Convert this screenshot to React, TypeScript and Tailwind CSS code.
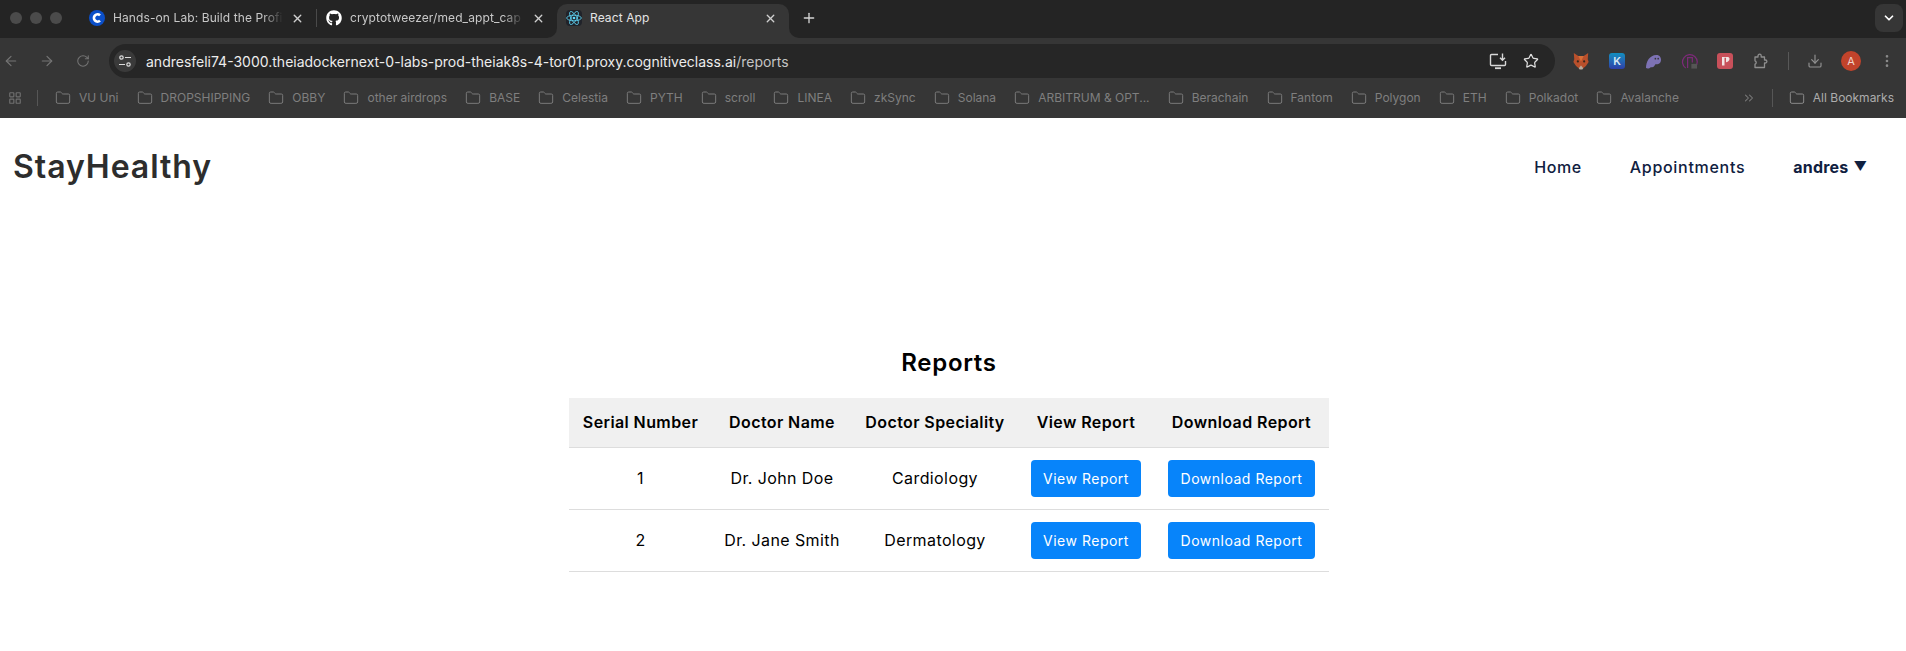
import { ArrowLeft, ArrowRight, RotateCw, Star, Download, EllipsisVertical, Plus, X, ChevronDown, ChevronsRight, Folder, LayoutGrid } from 'lucide-react'
import { FaGithub } from 'react-icons/fa'

const bookmarks = ['VU Uni', 'DROPSHIPPING', 'OBBY', 'other airdrops', 'BASE', 'Celestia', 'PYTH', 'scroll', 'LINEA', 'zkSync', 'Solana', 'ARBITRUM & OPT...', 'Berachain', 'Fantom', 'Polygon', 'ETH', 'Polkadot', 'Avalanche']

const reports = [
    { id: 1, doctor: 'Dr. John Doe', speciality: 'Cardiology' },
    { id: 2, doctor: 'Dr. Jane Smith', speciality: 'Dermatology' },
]

function ReactIcon() {
    return (
        <div className="w-4 h-4 rounded-sm bg-[#20232a] flex items-center justify-center shrink-0">
            <svg viewBox="-12 -12 24 24" className="w-4 h-4" fill="none" stroke="#61dafb" strokeWidth="1.2">
                <circle r="2" fill="#61dafb" stroke="none" />
                <ellipse rx="11" ry="4.2" />
                <ellipse rx="11" ry="4.2" transform="rotate(60)" />
                <ellipse rx="11" ry="4.2" transform="rotate(120)" />
            </svg>
        </div>
    )
}

function CourseIcon() {
    return (
        <div className="w-4 h-4 rounded-full bg-[#0b4fc9] flex items-center justify-center shrink-0">
            <svg viewBox="0 0 16 16" className="w-4 h-4" fill="none" stroke="white" strokeWidth="2.6">
                <path d="M11 5.4a3.6 3.6 0 1 0 0 5.2" />
            </svg>
        </div>
    )
}

function Tab({ title, icon, width, active }: { title: string; icon: React.ReactNode; width: string; active?: boolean }) {
    return (
        <div className={`relative h-[34px] flex items-center pl-[9px] pr-[12px] pb-[6px] gap-2 shrink-0 ${width} ${active ? 'bg-[#363636] rounded-t-[10px]' : ''}`}>
            {icon}
            <span className={`flex-1 min-w-0 whitespace-nowrap text-[12px] tracking-[0.1px] ${active ? 'text-[#e4e4e4]' : 'text-[#c8c8c8] [mask-image:linear-gradient(to_right,black_88%,transparent)]'}`}>
                {title}
            </span>
            <X className="w-[13px] h-[13px] text-[#d0d0d0] shrink-0" strokeWidth={2.5} />
            {active && (
                <>
                    <div className="absolute -left-2.5 bottom-0 w-2.5 h-2.5 bg-[#363636]">
                        <div className="w-full h-full bg-[#242424] rounded-br-[10px]"></div>
                    </div>
                    <div className="absolute -right-2.5 bottom-0 w-2.5 h-2.5 bg-[#363636]">
                        <div className="w-full h-full bg-[#242424] rounded-bl-[10px]"></div>
                    </div>
                </>
            )}
        </div>
    )
}

function TabStrip() {
    return (
        <div className="h-[38px] bg-[#242424] flex items-end">
            <div className="w-[80px] h-[38px] shrink-0 pl-2.5 pb-[2px] flex items-center gap-2">
                <div className="w-3 h-3 rounded-full bg-[#4b4b4b]"></div>
                <div className="w-3 h-3 rounded-full bg-[#4b4b4b]"></div>
                <div className="w-3 h-3 rounded-full bg-[#4b4b4b]"></div>
            </div>
            <Tab title="Hands-on Lab: Build the Profi" icon={<CourseIcon />} width="w-[236px]" />
            <div className="w-px h-[18px] bg-[#4a4a4a] mb-[11px] shrink-0"></div>
            <Tab title="cryptotweezer/med_appt_cap" icon={<FaGithub className="w-4 h-4 text-white shrink-0" />} width="w-[240px]" />
            <Tab title="React App" icon={<ReactIcon />} width="w-[232px]" active />
            <div className="ml-3 h-[34px] pb-[6px] flex items-center">
                <Plus className="w-4 h-4 text-[#d4d4d4]" strokeWidth={2} />
            </div>
            <div className="ml-auto mr-[3px] self-start mt-1 w-7 h-7 rounded-lg bg-[#363636] flex items-center justify-center">
                <ChevronDown className="w-3.5 h-3.5 text-white" strokeWidth={3} />
            </div>
        </div>
    )
}

function Fox() {
    return (
        <svg viewBox="0 0 20 20" className="w-[18px] h-[18px]">
            <path d="M2 1l5 3.500h6L18 1l-.500 7 1 3-3 4.500-3 2.500h-5l-3-2.500-3-4.500 1-3z" fill="#b9502c" />
            <path d="M7 4.500l3 6 3-6z" fill="#d86f38" />
            <path d="M7.500 18L10 15l2.500 3-1 1.500h-3z" fill="#b8aa9c" />
            <circle cx="6.500" cy="10.500" r="1.200" fill="#33251c" />
            <circle cx="13.500" cy="10.500" r="1.200" fill="#33251c" />
        </svg>
    )
}

function Extensions() {
    return (
        <div className="flex items-center">
            <div className="w-9 flex justify-center"><Fox /></div>
            <div className="w-9 flex justify-center">
                <div className="w-4 h-4 rounded-[3px] bg-gradient-to-b from-[#0f8fc0] to-[#2c3fa8] text-[11px] leading-4 text-center font-semibold text-[#d8e8f4]">K</div>
            </div>
            <div className="w-9 flex justify-center">
                <svg viewBox="0 0 18 16" className="w-[17px] h-[15px]">
                    <path d="M1 15c0-7 4-14 11-14 4 0 5 3 5 5 0 4-3 5-6 5-1 2-2 4-5 3-1 1-3 2-5 1z" fill="#7d72b4" />
                    <circle cx="11" cy="5" r="0.900" fill="#363636" />
                    <circle cx="14" cy="5" r="0.900" fill="#363636" />
                </svg>
            </div>
            <div className="w-9 flex justify-center">
                <svg viewBox="0 0 18 18" className="w-[17px] h-[17px]" fill="none" stroke="#7c2a78" strokeWidth="1.300">
                    <path d="M5 16a7.800 7.800 0 1 1 10 -1" />
                    <path d="M7 16V5h5v5" />
                    <rect x="11" y="11.500" width="6" height="5" fill="#555" stroke="none" />
                </svg>
            </div>
            <div className="w-9 flex justify-center">
                <div className="w-4 h-4 rounded-[3px] bg-[#c8505a] flex items-center justify-center">
                    <svg viewBox="0 0 12 12" className="w-3 h-3">
                        <path d="M3 2h6c1 0 1.500 1 1.500 2 0 2-2 3-3.500 3.200V2.800H5.500V10.500H3z" fill="#f1e4e4" />
                    </svg>
                </div>
            </div>
            <div className="w-9 flex justify-center">
                <svg viewBox="0 0 16 16" className="w-4 h-4" fill="none" stroke="#8f8f8f" strokeWidth="1.300" strokeLinejoin="round">
                    <path d="M2 4h3V2.800a1.600 1.600 0 0 1 3.200 0V4h3.300v3h.900a1.500 1.500 0 0 1 0 3h-.900v4.500H2v-3.300a1.800 1.800 0 0 0 0-3.400z" />
                </svg>
            </div>
        </div>
    )
}

function InstallIcon() {
    return (
        <svg viewBox="0 0 18 18" className="ml-auto w-[18px] h-[18px]" fill="none" stroke="#d8d8d8" strokeWidth="1.400">
            <path d="M9 2.500H2.500a1 1 0 0 0-1 1v9a1 1 0 0 0 1 1h13a1 1 0 0 0 1-1V9" />
            <path d="M6 16.200h6" strokeWidth="1.800" />
            <path d="M13.500 1.500V8M11 5.700l2.500 2.500L16 5.700" />
        </svg>
    )
}

function Toolbar() {
    return (
        <div className="h-10 bg-[#363636] flex items-start pt-[6px]">
            <div className="w-[109px] h-[34px] shrink-0 flex items-center">
                <ArrowLeft className="w-4 h-4 ml-[3px] text-[#747474]" strokeWidth={1.8} />
                <ArrowRight className="w-4 h-4 ml-5 text-[#747474]" strokeWidth={1.8} />
                <RotateCw className="w-[14px] h-[14px] ml-[21px] text-[#747474]" strokeWidth={1.8} />
            </div>
            <div className="w-[1446px] h-[34px] rounded-full bg-[#262626] flex items-center pl-[5px] pr-[16px] shrink-0">
                <div className="w-[22px] h-[22px] rounded-full bg-[#3a3a3a] flex items-center justify-center shrink-0">
                    <svg viewBox="0 0 14 14" className="w-[14px] h-[14px]" fill="none" stroke="#dcdcdc" strokeWidth="1.200">
                        <circle cx="3.500" cy="3.500" r="1.700" />
                        <path d="M7 3.500h6M1 10.500h6" />
                        <circle cx="10.500" cy="10.500" r="1.700" />
                    </svg>
                </div>
                <span className="ml-[10px] text-[14px] text-[#ececec] whitespace-nowrap">
                    andresfeli74-3000.theiadockernext-0-labs-prod-theiak8s-4-tor01.proxy.cognitiveclass.ai<span className="text-[#c4c4c4]">/reports</span>
                </span>
                <InstallIcon />
                <Star className="ml-4 w-4 h-4 text-[#e0e0e0]" strokeWidth={1.8} />
            </div>
            <div className="ml-[8px] h-[34px] flex items-center">
                <Extensions />
                <div className="ml-[9px] w-px h-[18px] bg-[#585858]"></div>
                <Download className="ml-[18px] w-4 h-4 text-[#8f8f8f]" strokeWidth={1.8} />
                <div className="ml-[18px] w-5 h-5 rounded-full bg-[#c2432b] text-[11px] leading-5 text-center text-[#f0d4cc]">A</div>
                <EllipsisVertical className="ml-[18px] w-4 h-4 text-[#8a8a8a]" strokeWidth={2} />
            </div>
        </div>
    )
}

function BookmarksBar() {
    return (
        <div className="h-10 bg-[#363636] flex items-center">
            <LayoutGrid className="ml-[8px] w-[14px] h-[14px] text-[#6f6f6f] shrink-0" strokeWidth={2} />
            <div className="ml-[15px] w-px h-[16px] bg-[#565656] shrink-0"></div>
            <div className="ml-[17px] flex items-center gap-[18.100px] flex-1 min-w-0">
                {bookmarks.map((name) => (
                    <div key={name} className="flex items-center gap-2 shrink-0">
                        <Folder className="w-4 h-4 text-[#7a7a7a]" strokeWidth={1.5} />
                        <span className="text-[12px] text-[#7f7f7f] whitespace-nowrap">{name}</span>
                    </div>
                ))}
            </div>
            <ChevronsRight className="w-[14px] h-[14px] text-[#7a7a7a] shrink-0" strokeWidth={1.8} />
            <div className="ml-4 w-px h-[18px] bg-[#565656] shrink-0"></div>
            <div className="ml-4 mr-3 flex items-center gap-2 shrink-0">
                <Folder className="w-4 h-4 text-[#8a8a8a]" strokeWidth={1.5} />
                <span className="text-[12px] text-[#adadad] whitespace-nowrap">All Bookmarks</span>
            </div>
        </div>
    )
}

function Navbar() {
    return (
        <nav className="h-[98px] flex items-start pt-[28px] pl-[13px] pr-[39px]">
            <h1 className="text-[32px] leading-[42px] font-semibold text-[#2d2d2d] tracking-[0.95px]">StayHealthy</h1>
            <ul className="ml-auto flex items-center gap-[48px] h-[42px] text-[16px] font-medium text-[#0f2040]">
                <li className="tracking-[0.6px]">Home</li>
                <li className="tracking-[0.7px]">Appointments</li>
                <li className="flex items-center gap-[5px] font-bold">
                    <span className="tracking-[0.2px]">andres</span>
                    <span className="text-[13px] leading-4 -mt-[2px]">▼</span>
                </li>
            </ul>
        </nav>
    )
}

function ReportsTable() {
    return (
        <table className="w-[760px] table-fixed border-collapse text-center text-[16px] tracking-[0.4px] text-black">
            <colgroup>
                <col className="w-[143px]" />
                <col className="w-[140px]" />
                <col className="w-[166px]" />
                <col className="w-[136px]" />
                <col className="w-[175px]" />
            </colgroup>
            <thead>
                <tr className="h-[49px] bg-[#f0f0f0] border-b border-[#dddddd] font-semibold">
                    <th className="font-semibold">Serial Number</th>
                    <th className="font-semibold">Doctor Name</th>
                    <th className="font-semibold">Doctor Speciality</th>
                    <th className="font-semibold">View Report</th>
                    <th className="font-semibold">Download Report</th>
                </tr>
            </thead>
            <tbody>
                {reports.map((report) => (
                    <tr key={report.id} className="h-[62px] border-b border-[#dddddd]">
                        <td>{report.id}</td>
                        <td>{report.doctor}</td>
                        <td>{report.speciality}</td>
                        <td>
                            <button className="w-[110px] h-[37px] rounded-[4px] bg-[#0784fa] text-white text-[14px] tracking-[0.5px]">View Report</button>
                        </td>
                        <td>
                            <button className="w-[147px] h-[37px] rounded-[4px] bg-[#0784fa] text-white text-[14px] tracking-[0.5px]">Download Report</button>
                        </td>
                    </tr>
                ))}
            </tbody>
        </table>
    )
}

export default function App() {
    return (
        <div className="h-screen overflow-hidden bg-white font-['Inter',sans-serif]">
            <TabStrip />
            <Toolbar />
            <BookmarksBar />
            <Navbar />
            <main className="flex flex-col items-center pt-[129px] -ml-[8px]">
                <h2 className="text-[24px] leading-[36px] font-semibold text-black tracking-[0.7px] mb-[17px]">Reports</h2>
                <ReportsTable />
            </main>
        </div>
    )
}
